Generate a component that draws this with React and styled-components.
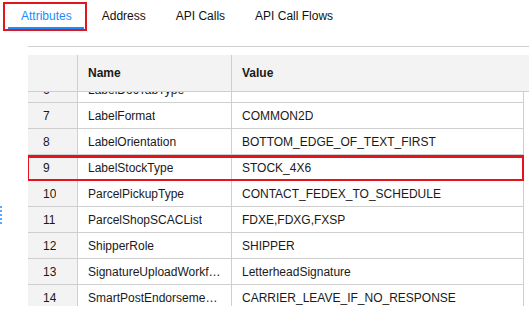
import React from "react";
import styled, { createGlobalStyle } from "styled-components";

const Global = createGlobalStyle`
  html, body { margin: 0; padding: 0; background: #fff; }
  body { font-family: "Liberation Sans", Arial, sans-serif; font-size: 12px; color: #222; }
`;

const Page = styled.div`
  position: relative;
  width: 529px;
  height: 315px;
  overflow: hidden;
`;

const TabBar = styled.div`
  display: flex;
  gap: 5px;
  padding-left: 8px;
`;

const Tab = styled.div`
  position: relative;
  padding: 9px 12px 4px 13px;
  line-height: 14px;
  font-size: 12px;
  color: ${(p) => (p.$active ? "#1a8cff" : "#111")};
  border-bottom: 2px solid ${(p) => (p.$active ? "#1a8cff" : "transparent")};
  cursor: pointer;
  ${(p) =>
    p.$marked &&
    `
    &::after {
      content: "";
      position: absolute;
      left: -5px;
      right: -3px;
      top: 2px;
      bottom: -4px;
      border: 2px solid #e3141c;
    }
  `}
`;

const Divider = styled.div`
  margin: 17px 0 0 28px;
  height: 1px;
  background: #cfcfcf;
`;

const Panel = styled.div`
  margin: 8px 0 0 28px;
`;

const HeaderRow = styled.div`
  display: grid;
  grid-template-columns: 50px 154px 1fr;
  height: 36px;
  background: #f3f3f3;
  border-bottom: 1px solid #cfcfcf;
  font-weight: bold;
  color: #1a1a1a;
`;

const HeadCell = styled.div`
  display: flex;
  align-items: center;
  padding-left: ${(p) => (p.$index ? "15px" : "10px")};
  border-right: ${(p) => (p.$last ? "none" : "1px solid #cfcfcf")};
`;

const Body = styled.div`
  height: 214px;
  overflow: hidden;
  width: 496px;
`;

const Rows = styled.div`
  margin-top: -15px;
`;

const Row = styled.div`
  position: relative;
  display: grid;
  grid-template-columns: 50px 154px 292px;
  height: 25px;
  border-bottom: 1px solid #cfcfcf;
  ${(p) =>
    p.$marked &&
    `
    &::after {
      content: "";
      position: absolute;
      left: -2px;
      right: -1px;
      top: 0;
      bottom: -2px;
      border: 3px solid #e3141c;
      pointer-events: none;
    }
  `}
`;

const Cell = styled.div`
  display: flex;
  align-items: center;
  min-width: 0;
  padding: 0 10px 0 ${(p) => (p.$index ? "15px" : "10px")};
  background: ${(p) => (p.$index ? "#f3f3f3" : "#fff")};
  border-right: 1px solid #cfcfcf;
  color: #1a1a1a;
`;

const Text = styled.span`
  white-space: nowrap;
  overflow: hidden;
  text-overflow: ellipsis;
`;

const Grip = styled.div`
  position: absolute;
  left: 0;
  top: 206px;
  width: 2px;
  height: 19px;
  background: repeating-linear-gradient(
    to bottom,
    #5aa9ff 0 2px,
    transparent 2px 4px
  );
`;

const tabs = ["Attributes", "Address", "API Calls", "API Call Flows"];

const rows = [
  [6, "LabelDocTabType", ""],
  [7, "LabelFormat", "COMMON2D"],
  [8, "LabelOrientation", "BOTTOM_EDGE_OF_TEXT_FIRST"],
  [9, "LabelStockType", "STOCK_4X6"],
  [10, "ParcelPickupType", "CONTACT_FEDEX_TO_SCHEDULE"],
  [11, "ParcelShopSCACList", "FDXE,FDXG,FXSP"],
  [12, "ShipperRole", "SHIPPER"],
  [13, "SignatureUploadWorkflow", "LetterheadSignature"],
  [14, "SmartPostEndorsementType", "CARRIER_LEAVE_IF_NO_RESPONSE"],
  [15, "SmartPostHubId", ""],
];

export default function App() {
  return (
    <Page>
      <Global />
      <TabBar>
        {tabs.map((t, i) => (
          <Tab key={t} $active={i === 0} $marked={i === 0}>
            {t}
          </Tab>
        ))}
      </TabBar>
      <Divider />
      <Panel>
        <HeaderRow>
          <HeadCell $index />
          <HeadCell>Name</HeadCell>
          <HeadCell $last>Value</HeadCell>
        </HeaderRow>
        <Body>
          <Rows>
            {rows.map(([n, name, value]) => (
              <Row key={n} $marked={n === 9}>
                <Cell $index>
                  <Text>{n}</Text>
                </Cell>
                <Cell>
                  <Text>{name}</Text>
                </Cell>
                <Cell>
                  <Text>{value}</Text>
                </Cell>
              </Row>
            ))}
          </Rows>
        </Body>
      </Panel>
      <Grip />
    </Page>
  );
}
